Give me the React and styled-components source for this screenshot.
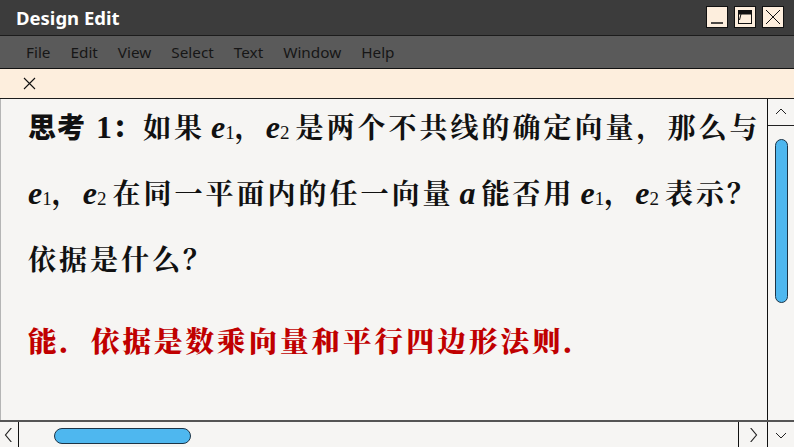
import React from "react";
import styled, { createGlobalStyle } from "styled-components";

const Global = createGlobalStyle`
  html, body { margin: 0; padding: 0; background: #f6f5f3; }
  body { overflow: hidden; }
`;

const Window = styled.div`
  width: 794px;
  height: 447px;
  display: flex;
  flex-direction: column;
  overflow: hidden;
  background: #f6f5f3;
`;

const TitleBar = styled.div`
  height: 35px;
  flex: none;
  background: #3c3c3c;
  border-bottom: 1px solid #1c1c1c;
  display: flex;
  align-items: center;
  justify-content: space-between;
  padding: 0 10px 0 16px;
`;

const Title = styled.div`
  color: #fff;
  font-family: "Noto Sans", "Open Sans", sans-serif;
  font-weight: 700;
  font-size: 18.5px;
`;

const WinButtons = styled.div`
  display: flex;
  gap: 6px;
  margin-top: -2px;
`;

const WinButton = styled.div`
  width: 20px;
  height: 20px;
  background: #fdeedd;
  border: 1px solid #111;
  display: flex;
  align-items: center;
  justify-content: center;
`;

const MenuBar = styled.div`
  height: 32px;
  flex: none;
  background: #5a5a5a;
  border-bottom: 1px solid #111;
  display: flex;
  align-items: center;
  padding-left: 26px;
  gap: 20px;
`;

const MenuItem = styled.span`
  color: #161616;
  font-family: "Noto Sans", "Open Sans", sans-serif;
  font-size: 15.3px;
`;

const ToolBar = styled.div`
  height: 29px;
  flex: none;
  background: #fdeedd;
  border-bottom: 1px solid #1c1c1c;
  display: flex;
  align-items: center;
  padding-left: 23px;
`;

const Body = styled.div`
  flex: 1;
  display: flex;
  min-height: 0;
`;

const Content = styled.div`
  flex: 1;
  background: #f6f5f3;
  border-left: 1px solid #b5b5b5;
  padding-left: 27px;
  overflow: hidden;
`;

const Question = styled.div`
  margin-top: -3px;
  font-family: "Liberation Serif", "Noto Serif CJK SC", "Noto Sans CJK SC", serif;
  font-size: 28px;
  line-height: 61px;
  letter-spacing: 3px;
  color: #111;
  white-space: nowrap;
`;

const Line = styled.div``;

const Strong = styled.span`
  font-weight: 800;
  font-family: "Noto Sans CJK SC", sans-serif;
  letter-spacing: 1px;
`;

const Num = styled.span`
  font-family: "Liberation Serif", serif;
  font-weight: 700;
  font-size: 32px;
  letter-spacing: 0;
`;

const Han = styled.span`
  font-family: "Noto Serif CJK SC", "Noto Sans CJK SC", serif;
  font-weight: ${(p) => (p.$bold ? 900 : 700)};
`;

const Var = styled.span`
  font-family: "Liberation Serif", serif;
  font-style: italic;
  font-weight: 700;
  font-size: 32px;
  letter-spacing: 0;
  margin: 0 ${(p) => (p.$after ? 6 : 0)}px 0 ${(p) => (p.$before ? 6 : 0)}px;
  sub {
    font-style: normal;
    font-weight: 400;
    font-size: 19px;
    vertical-align: baseline;
    position: relative;
    top: 1px;
  }
`;

const Answer = styled.div`
  margin-top: 18px;
  font-family: "Noto Serif CJK SC", "Noto Sans CJK SC", serif;
  font-weight: 900;
  font-size: 28.5px;
  line-height: 61px;
  letter-spacing: 3px;
  color: #c00000;
  white-space: nowrap;
`;

const VScroll = styled.div`
  width: 26px;
  flex: none;
  border-left: 1px solid #111;
  background: #f6f5f3;
  display: flex;
  flex-direction: column;
  align-items: center;
`;

const UpButton = styled.div`
  height: 26px;
  width: 100%;
  border-bottom: 1px solid #222;
  display: flex;
  align-items: center;
  justify-content: center;
`;

const VThumb = styled.div`
  margin-top: 13px;
  width: 11px;
  height: 162px;
  background: #4eb7ef;
  border: 1px solid #1d3446;
  border-radius: 7px;
`;

const HScroll = styled.div`
  height: 25px;
  flex: none;
  border-top: 2px solid #555;
  display: flex;
  background: #f6f5f3;
`;

const ArrowCell = styled.div`
  width: ${(p) => p.$w}px;
  flex: none;
  display: flex;
  align-items: center;
  justify-content: center;
  border-left: ${(p) => (p.$left ? "1px solid #111" : "none")};
  border-right: ${(p) => (p.$right ? "1px solid #111" : "none")};
`;

const Track = styled.div`
  flex: 1;
  display: flex;
  align-items: center;
  padding-left: 35px;
`;

const HThumb = styled.div`
  width: 135px;
  height: 14px;
  background: #4eb7ef;
  border: 1px solid #1d3446;
  border-radius: 8px;
  margin-top: 2px;
`;

const Chevron = ({ dir, size = 12 }) => {
  const pts = {
    up: "1,8 6,3 11,8",
    down: "1,4 6,9 11,4",
    left: "8,0 3,6 8,12",
    right: "4,0 9,6 4,12",
  }[dir];
  return (
    <svg width={size} height={size} viewBox="0 0 12 12">
      <polyline points={pts} fill="none" stroke="#222" strokeWidth="1" />
    </svg>
  );
};

const E = ({ n, before, after }) => (
  <Var $before={before} $after={after}>
    e<sub>{n}</sub>
  </Var>
);

const menu = ["File", "Edit", "View", "Select", "Text", "Window", "Help"];

export default function App() {
  return (
    <Window>
      <Global />
      <TitleBar>
        <Title>Design Edit</Title>
        <WinButtons>
          <WinButton>
            <svg width="16" height="16" viewBox="0 0 16 16">
              <line x1="2" y1="14" x2="14" y2="14" stroke="#111" strokeWidth="1.5" />
            </svg>
          </WinButton>
          <WinButton>
            <svg width="18" height="18" viewBox="0 0 18 18">
              <rect x="2.5" y="2.5" width="13" height="13" fill="none" stroke="#111" strokeWidth="1" />
              <rect x="2.5" y="2.5" width="13" height="4" fill="#111" />
              <line x1="5" y1="6" x2="3.5" y2="12" stroke="#111" strokeWidth="1" />
            </svg>
          </WinButton>
          <WinButton>
            <svg width="18" height="18" viewBox="0 0 18 18">
              <path d="M2 2 L16 16 M16 2 L2 16" stroke="#111" strokeWidth="1" />
            </svg>
          </WinButton>
        </WinButtons>
      </TitleBar>
      <MenuBar>
        {menu.map((m) => (
          <MenuItem key={m}>{m}</MenuItem>
        ))}
      </MenuBar>
      <ToolBar>
        <svg width="13" height="13" viewBox="0 0 13 13">
          <path d="M1 1 L12 12 M12 1 L1 12" stroke="#111" strokeWidth="1.1" />
        </svg>
      </ToolBar>
      <Body>
        <Content>
          <Question>
            <Line>
              <Strong>思考</Strong> <Num>1</Num>
              <Han $bold>：</Han>
              <Han>如果</Han>
              <E n={1} before />
              <Han>，</Han>
              <E n={2} after />
              <Han>是两个不共线的确定向量，那么与</Han>
            </Line>
            <Line>
              <E n={1} />
              <Han>，</Han>
              <E n={2} after />
              <Han>在同一平面内的任一向量</Han>
              <Var $before $after>a</Var>
              <Han>能否用</Han>
              <E n={1} before />
              <Han>，</Han>
              <E n={2} after />
              <Han>表示？</Han>
            </Line>
            <Line>
              <Han>依据是什么？</Han>
            </Line>
          </Question>
          <Answer>能．依据是数乘向量和平行四边形法则．</Answer>
        </Content>
        <VScroll>
          <UpButton>
            <Chevron dir="up" />
          </UpButton>
          <VThumb />
        </VScroll>
      </Body>
      <HScroll>
        <ArrowCell $w={18} $right>
          <Chevron dir="left" size={14} />
        </ArrowCell>
        <Track>
          <HThumb />
        </Track>
        <ArrowCell $w={28} $left>
          <Chevron dir="right" size={14} />
        </ArrowCell>
        <ArrowCell $w={26} $left>
          <Chevron dir="down" />
        </ArrowCell>
      </HScroll>
    </Window>
  );
}
